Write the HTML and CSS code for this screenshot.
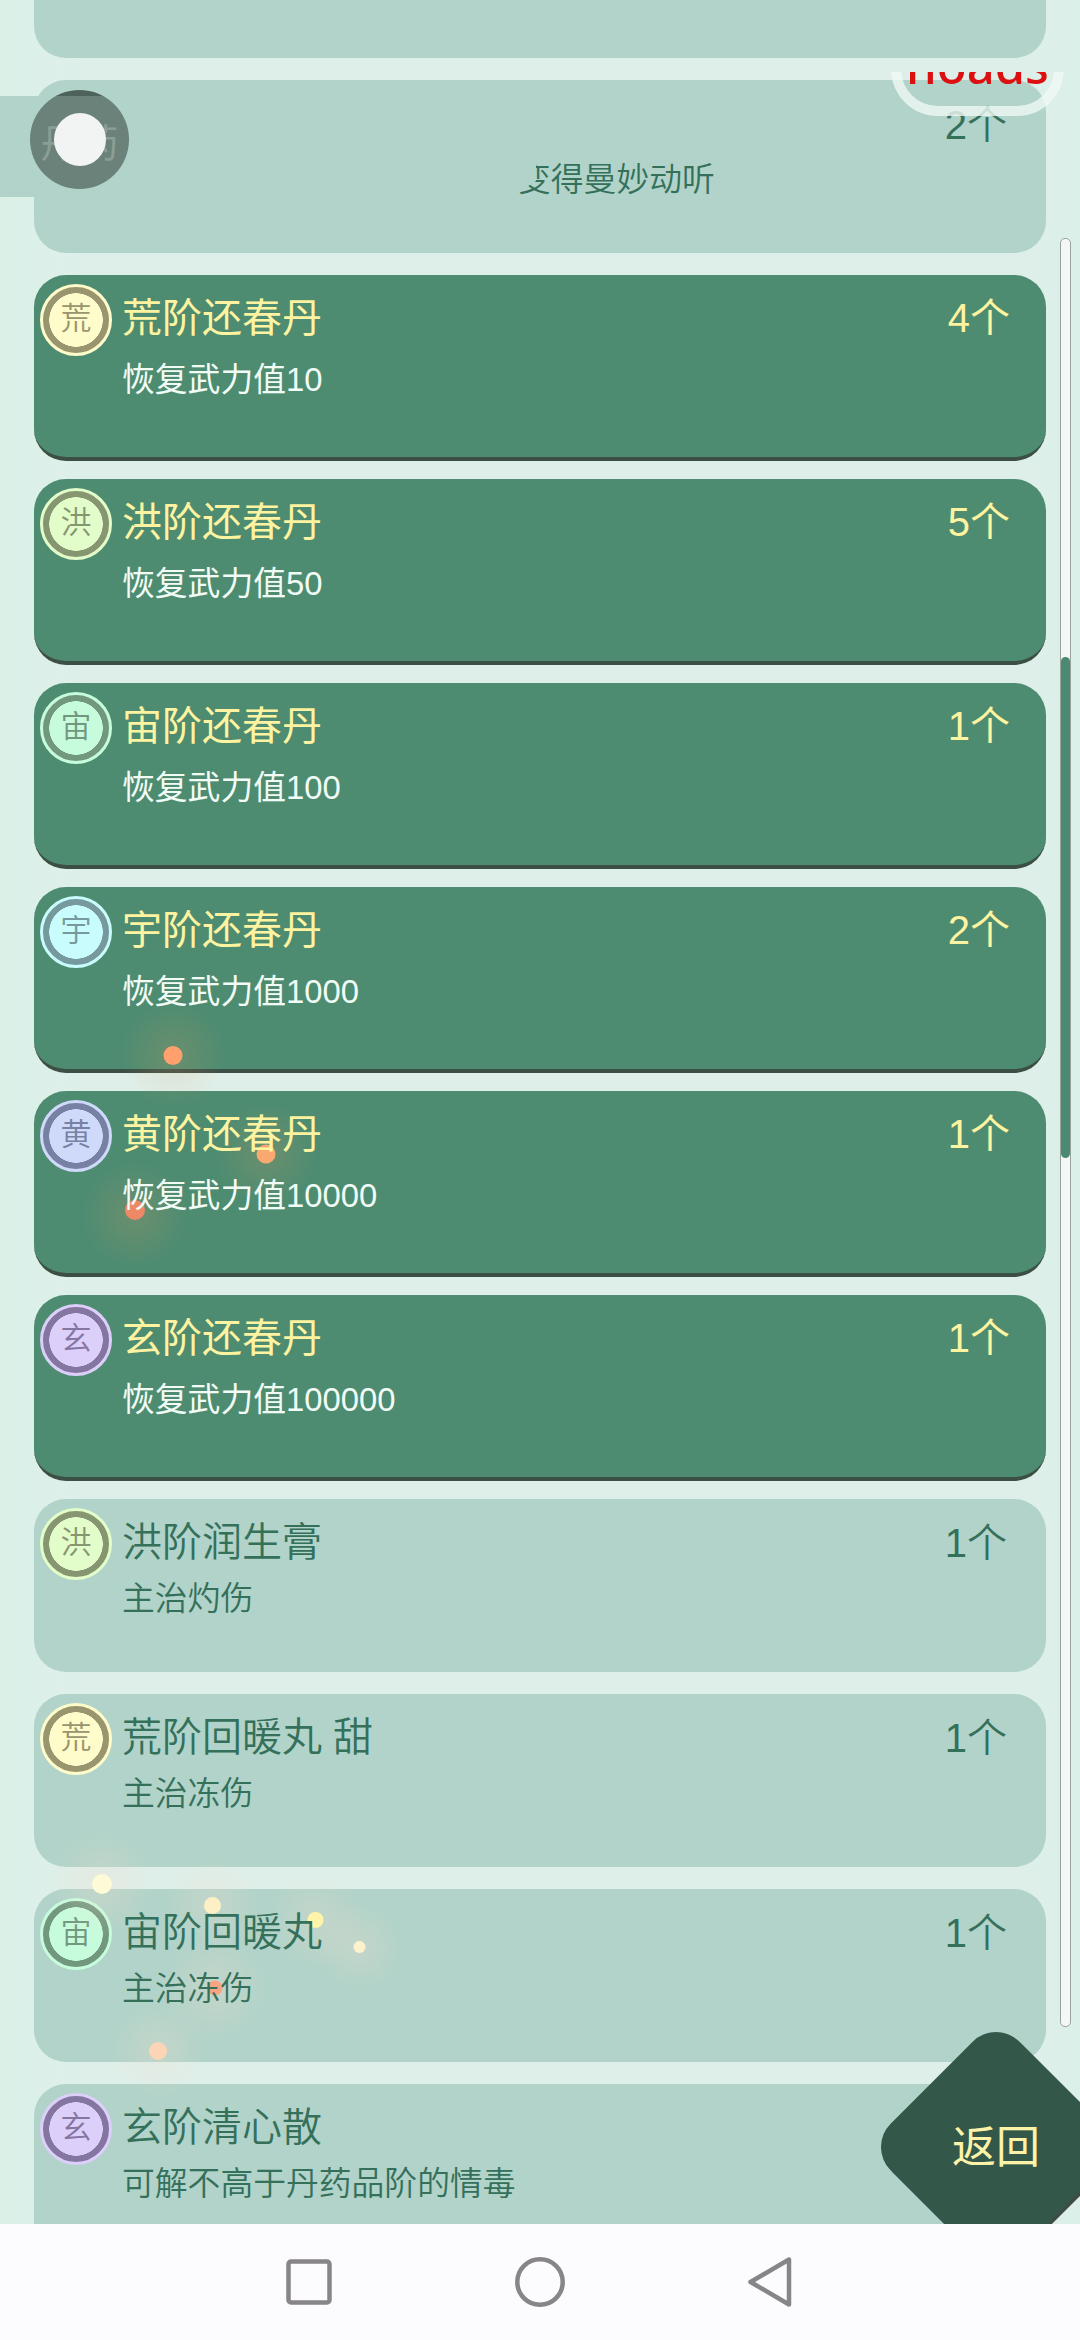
FILE: index.html
```html
<!DOCTYPE html>
<html lang="zh-CN">
<head>
<meta charset="utf-8">
<title>丹药</title>
<link rel="stylesheet" href="styles.css">
</head>
<body>
<main class="game">
  <section class="list">
    <article class="card muted first"></article>
    <article class="card muted voice"><div class="info"><p class="desc cut">变得曼妙动听</p></div><span class="count">2个</span></article>
    <article class="card active"><span class="badge huang">荒</span><div class="info"><h2>荒阶还春丹</h2><p class="desc">恢复武力值10</p></div><span class="count">4个</span></article>
    <article class="card active"><span class="badge hong">洪</span><div class="info"><h2>洪阶还春丹</h2><p class="desc">恢复武力值50</p></div><span class="count">5个</span></article>
    <article class="card active"><span class="badge zhou">宙</span><div class="info"><h2>宙阶还春丹</h2><p class="desc">恢复武力值100</p></div><span class="count">1个</span></article>
    <article class="card active"><span class="badge yu">宇</span><div class="info"><h2>宇阶还春丹</h2><p class="desc">恢复武力值1000</p></div><span class="count">2个</span></article>
    <article class="card active"><span class="badge yellow">黄</span><div class="info"><h2>黄阶还春丹</h2><p class="desc">恢复武力值10000</p></div><span class="count">1个</span></article>
    <article class="card active"><span class="badge xuan">玄</span><div class="info"><h2>玄阶还春丹</h2><p class="desc">恢复武力值100000</p></div><span class="count">1个</span></article>
    <article class="card muted"><span class="badge hong">洪</span><div class="info"><h2>洪阶润生膏</h2><p class="desc">主治灼伤</p></div><span class="count">1个</span></article>
    <article class="card muted"><span class="badge huang">荒</span><div class="info"><h2>荒阶回暖丸 甜</h2><p class="desc">主治冻伤</p></div><span class="count">1个</span></article>
    <article class="card muted"><span class="badge zhou">宙</span><div class="info"><h2>宙阶回暖丸</h2><p class="desc">主治冻伤</p></div><span class="count">1个</span></article>
    <article class="card muted"><span class="badge xuan">玄</span><div class="info"><h2>玄阶清心散</h2><p class="desc">可解不高于丹药品阶的情毒</p></div></article>
  </section>

  <svg class="sparks" viewBox="0 0 1080 2224" aria-hidden="true">
    <defs>
      <radialGradient id="glow"><stop offset="0" stop-color="#e09a60" stop-opacity=".2"/><stop offset="1" stop-color="#e09a60" stop-opacity="0"/></radialGradient>
      <radialGradient id="haze"><stop offset="0" stop-color="#f4dccb" stop-opacity=".28"/><stop offset="1" stop-color="#f4dccb" stop-opacity="0"/></radialGradient>
    </defs>
    <g fill="url(#glow)"><circle cx="173" cy="1055" r="52"/><circle cx="266" cy="1154" r="50"/><circle cx="135" cy="1215" r="52"/></g>
    <g fill="url(#haze)"><circle cx="102" cy="1884" r="55"/><circle cx="212" cy="1905" r="50"/><circle cx="315" cy="1920" r="50"/><circle cx="359" cy="1947" r="45"/><circle cx="215" cy="1988" r="55"/><circle cx="158" cy="2051" r="50"/></g>
    <circle cx="173" cy="1055.5" r="9.5" fill="#ffa06e"/>
    <circle cx="266" cy="1154" r="9.5" fill="#f9a970"/>
    <circle cx="135" cy="1210" r="10" fill="#ee8968"/>
    <circle cx="102" cy="1884" r="10" fill="#fdfad8"/>
    <circle cx="212.5" cy="1905.5" r="8.5" fill="#fdf0c4"/>
    <circle cx="315.5" cy="1920" r="8" fill="#fff4a8"/>
    <circle cx="359.5" cy="1947" r="6" fill="#fdf2cc"/>
    <circle cx="215" cy="1988" r="7.5" fill="#f9a583"/>
    <circle cx="158" cy="2051" r="9" fill="#fcd5b6"/>
  </svg>

  <div class="side-tab"></div>
  <div class="touch"><span>丹药</span><i></i></div>
  <div class="noads-clip"><div class="noads">noads</div></div>
  <div class="scroll"><div class="thumb"></div></div>
  <div class="back"><span>返回</span></div>
</main>
<nav class="navbar">
  <svg viewBox="0 0 60 60"><rect x="9.5" y="7.5" width="41" height="41" rx="2.5"/></svg>
  <svg viewBox="0 0 60 60"><circle cx="30" cy="28" r="22.7"/></svg>
  <svg viewBox="0 0 60 60"><path d="M48 5.5V50.500L9.500 28Z"/></svg>
</nav>
</body>
</html>
```

FILE: styles.css
```css
* { box-sizing: border-box; margin: 0; padding: 0; }

body {
  width: 1080px;
  height: 2340px;
  overflow: hidden;
  font-family: "Liberation Sans", "Noto Sans CJK SC", sans-serif;
}

.game {
  position: relative;
  height: 2224px;
  overflow: hidden;
  background: linear-gradient(90deg, #daf1e8, #deefe9 8%, #deefe9 95%, #daf0e8);
}

.list { padding: 0 34px; }

.card {
  display: flex;
  align-items: flex-start;
  height: 173px;
  margin-bottom: 22px;
  padding: 9px 39px 0 6px;
  border-radius: 32px;
  background: #b1d3c9;
  color: #34705a;
}

.card.first { height: 58px; border-radius: 0 0 32px 32px; }

.card.active {
  height: 186px;
  margin-bottom: 18px;
  padding-right: 36px;
  border-bottom: 4px solid #3b4f45;
  background: #4e8c71;
  color: #fdf3a0;
}

.badge {
  flex: none;
  width: 72px;
  height: 72px;
  border: 3px solid var(--tint);
  border-radius: 50%;
  background: radial-gradient(circle, var(--tint) 26.500px, var(--ring) 27px);
  color: var(--ring);
  font-size: 31px;
  line-height: 64px;
  text-align: center;
  font-weight: 350;
}

.huang { --tint: #fefccb; --ring: #98956f; }
.hong { --tint: #e2fcca; --ring: #859670; }
.zhou { --tint: #c6fcdc; --ring: #72977f; }
.yu { --tint: #c9fcfc; --ring: #75999c; }
.yellow { --tint: #cfdafa; --ring: #7681a3; }
.xuan { --tint: #dccffa; --ring: #8475a1; }

.info { position: relative; z-index: 2; flex: 1; padding-left: 10px; }

h2 {
  height: 69px;
  font-size: 40px;
  line-height: 69px;
  font-weight: 400;
  white-space: pre;
}

.desc {
  height: 44px;
  font-size: 32.800px;
  line-height: 44px;
  white-space: nowrap;
}

.muted h2, .muted .desc, .muted .count { font-weight: 350; }
.active .desc { margin-top: 5px; color: #f2fcf6; }

.count { position: relative; z-index: 2; font-size: 40px; line-height: 69px; }
.muted .count { line-height: 70px; }
.voice .count { line-height: 72px; }

.cut {
  margin-top: 69px;
  padding-left: 468px;
  clip-path: polygon(486px 0, 486px 23px, 469px 34px, 469px 44px, 100% 44px, 100% 0);
}

.sparks {
  position: absolute;
  z-index: 1;
  inset: 0;
  width: 1080px;
  height: 2224px;
}

.side-tab {
  position: absolute;
  top: 96px;
  left: 0;
  width: 110px;
  height: 101px;
  background: #b1d3c9;
}

.touch {
  position: absolute;
  z-index: 3;
  top: 90px;
  left: 30px;
  display: grid;
  place-items: center;
  width: 99px;
  height: 99px;
  border-radius: 50%;
  background: linear-gradient(#4c625b 6px, #6a8279 6px);
  color: #8b9d96;
  font-size: 39px;
  line-height: 1;
}

.touch > * { grid-area: 1 / 1; }
.touch span { padding-top: 8px; white-space: nowrap; }
.touch i { width: 52px; height: 53px; border-radius: 50%; background: #f1f4f3; }

.noads-clip {
  position: absolute;
  z-index: 3;
  top: 72px;
  left: 880px;
  width: 200px;
  height: 50px;
  overflow: hidden;
}

.noads {
  width: 173px;
  height: 94px;
  margin: -50px 0 0 11px;
  border: 10px solid rgba(240, 249, 246, .8);
  border-radius: 50px;
  color: #dc1010;
  font: 500 49px/66px "Noto Sans", sans-serif;
  text-align: center;
}

.scroll {
  position: absolute;
  top: 238px;
  left: 1060px;
  width: 11px;
  height: 1789px;
  padding-top: 418px;
  border: 1px solid #98a39f;
  border-radius: 5px;
  background: #f5f7f7;
}

.thumb { height: 501px; border-radius: 5px; background: #4b8a70; }

.back {
  position: absolute;
  z-index: 3;
  top: 2056px;
  left: 905px;
  display: grid;
  place-items: center;
  width: 182px;
  height: 182px;
  border-radius: 33px;
  background: #33584a;
  box-shadow: 3px 0 0 #414a45;
  color: #fdf3a8;
  font-size: 44px;
  transform: rotate(45deg);
}

.back span { padding-bottom: 6px; transform: rotate(-45deg); white-space: nowrap; }

.navbar {
  display: flex;
  justify-content: center;
  gap: 171px;
  height: 116px;
  padding-top: 30px;
  background: #fcfbfe;
}

.navbar svg {
  width: 60px;
  height: 60px;
  fill: none;
  stroke: #888589;
  stroke-width: 4.500;
  stroke-linejoin: round;
}
```
